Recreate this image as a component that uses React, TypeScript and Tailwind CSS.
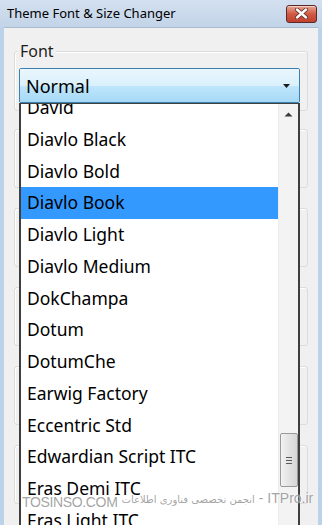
import React from 'react';

const fonts = [
  'David',
  'Diavlo Black',
  'Diavlo Bold',
  'Diavlo Book',
  'Diavlo Light',
  'Diavlo Medium',
  'DokChampa',
  'Dotum',
  'DotumChe',
  'Earwig Factory',
  'Eccentric Std',
  'Edwardian Script ITC',
  'Eras Demi ITC',
  'Eras Light ITC',
  'Eras Medium ITC',
];

const selected = 'Diavlo Book';

const CloseButton: React.FC = () => (
  <div className="w-[31px] h-[18px] rounded-[3px] border border-[#5a2a2a] bg-gradient-to-b from-[#e8a493] via-[#d05a44] to-[#c0402e] flex items-center justify-center shadow-[inset_0_1px_0_rgba(255,255,255,0.5)]">
    <svg width="13" height="11" viewBox="0 0 13 11">
      <path d="M2 1.5 L11 9.5 M11 1.5 L2 9.5" stroke="#5b2a22" strokeWidth="4" strokeLinecap="round" />
      <path d="M2 1.5 L11 9.5 M11 1.5 L2 9.5" stroke="#ffffff" strokeWidth="2.4" strokeLinecap="round" />
    </svg>
  </div>
);

const Scrollbar: React.FC = () => (
  <div className="w-[20px] shrink-0 bg-[#f3f3f3] flex flex-col items-center border-l border-[#ececec]">
    <div className="h-[20px] w-full flex items-center justify-center">
      <svg width="9" height="5" viewBox="0 0 9 5">
        <path d="M0.5 4.5 L4.5 0.5 L8.5 4.5 Z" fill="#3a3a3a" />
      </svg>
    </div>
    <div className="mt-[309px] w-[18px] h-[54px] rounded-[2px] border border-[#9a9a9a] bg-gradient-to-r from-[#f2f2f2] via-[#e3e3e3] to-[#d6d6d6] flex flex-col items-center justify-center gap-[2px]">
      <div className="w-[6px] h-px bg-[#5a5a5a]" />
      <div className="w-[6px] h-px bg-[#5a5a5a]" />
      <div className="w-[6px] h-px bg-[#5a5a5a]" />
    </div>
  </div>
);

export default function App() {
  return (
    <div
      className="relative w-[322px] h-[525px] overflow-hidden bg-[#bcd2ea] flex flex-col"
      style={{ fontFamily: '"Noto Sans", "Open Sans", sans-serif' }}
    >
      {/* title bar */}
      <div className="h-[27px] shrink-0 flex items-center justify-between pl-[7px] pr-[5px] bg-gradient-to-b from-[#d3e0ef] to-[#c3d4e8]">
        <span className="text-[13px] text-black leading-none">Theme Font &amp; Size Changer</span>
        <CloseButton />
      </div>

      {/* client area */}
      <div className="relative flex-1 mx-[4px] bg-[#f0f0f0] border-t border-[#a9bcd2] px-[10px] pt-[23px]">
        {/* group boxes sitting behind the open list */}
        <div className="relative h-[60px] border border-[#dcdcdc] rounded-[3px] shadow-[inset_1px_1px_0_#fff]">
          <span className="absolute -top-[12px] left-[3px] px-[2px] bg-[#f0f0f0] text-[16px] leading-[22px] text-[#1e1e1e]">Font</span>

          {/* combo box */}
          <div className="absolute left-[4px] top-[16px] w-[281px] h-[35px] rounded-[2px] border border-[#3c7fb1] overflow-hidden flex flex-col">
            <div className="h-1/2 bg-gradient-to-b from-[#eaf6fd] to-[#d9f0fc]" />
            <div className="h-1/2 bg-gradient-to-b from-[#bee6fd] to-[#a7d9f5]" />
            <div className="absolute inset-0 flex items-center justify-between pl-[6px] pr-[9px]">
              <span className="text-[18px] text-black leading-none">Normal</span>
              <svg width="7" height="4" viewBox="0 0 7 4">
                <path d="M0 0 L7 0 L3.5 4 Z" fill="#1a1a1a" />
              </svg>
            </div>
          </div>
        </div>
        <div className="flex flex-col gap-[20px] mt-[18px]">
          {[0, 1, 2, 3, 4].map((i) => (
            <div key={i} className="h-[59px] border border-[#dcdcdc] rounded-[3px] shadow-[inset_1px_1px_0_#fff]" />
          ))}
        </div>

        {/* open drop-down list */}
        <div className="absolute left-[15px] top-[75px] w-[281px] h-[430px] bg-white border-x-2 border-t border-[#3f3f3f] flex overflow-hidden">
          <div className="flex-1 overflow-hidden">
            <div className="-mt-[12px]">
              {fonts.map((f) => (
                <div
                  key={f}
                  className={`h-[31.75px] flex items-center pl-[6px] text-[17.5px] leading-none text-black whitespace-nowrap ${
                    f === selected ? 'bg-[#3399ff]' : ''
                  }`}
                >
                  {f}
                </div>
              ))}
            </div>
          </div>
          <Scrollbar />
        </div>
      </div>

      {/* watermark */}
      <div className="absolute left-[22px] top-[491px] flex items-end gap-[4px] whitespace-nowrap pointer-events-none text-[#8c8c8c]/80 [text-shadow:0_0_2px_#fff]">
        <span className="text-[14px] leading-none tracking-tight mb-[-4px]" style={{ fontFamily: '"Liberation Sans", sans-serif' }}>TOSINSO.COM</span>
        <span className="text-[10px] leading-none" style={{ fontFamily: '"DejaVu Sans", "Noto Sans", sans-serif' }}>
          انجمن تخصصی فناوری اطلاعات
        </span>
        <span className="text-[14px] leading-none" style={{ fontFamily: '"Liberation Sans", sans-serif' }}>- ITPro.ir</span>
      </div>
    </div>
  );
}
